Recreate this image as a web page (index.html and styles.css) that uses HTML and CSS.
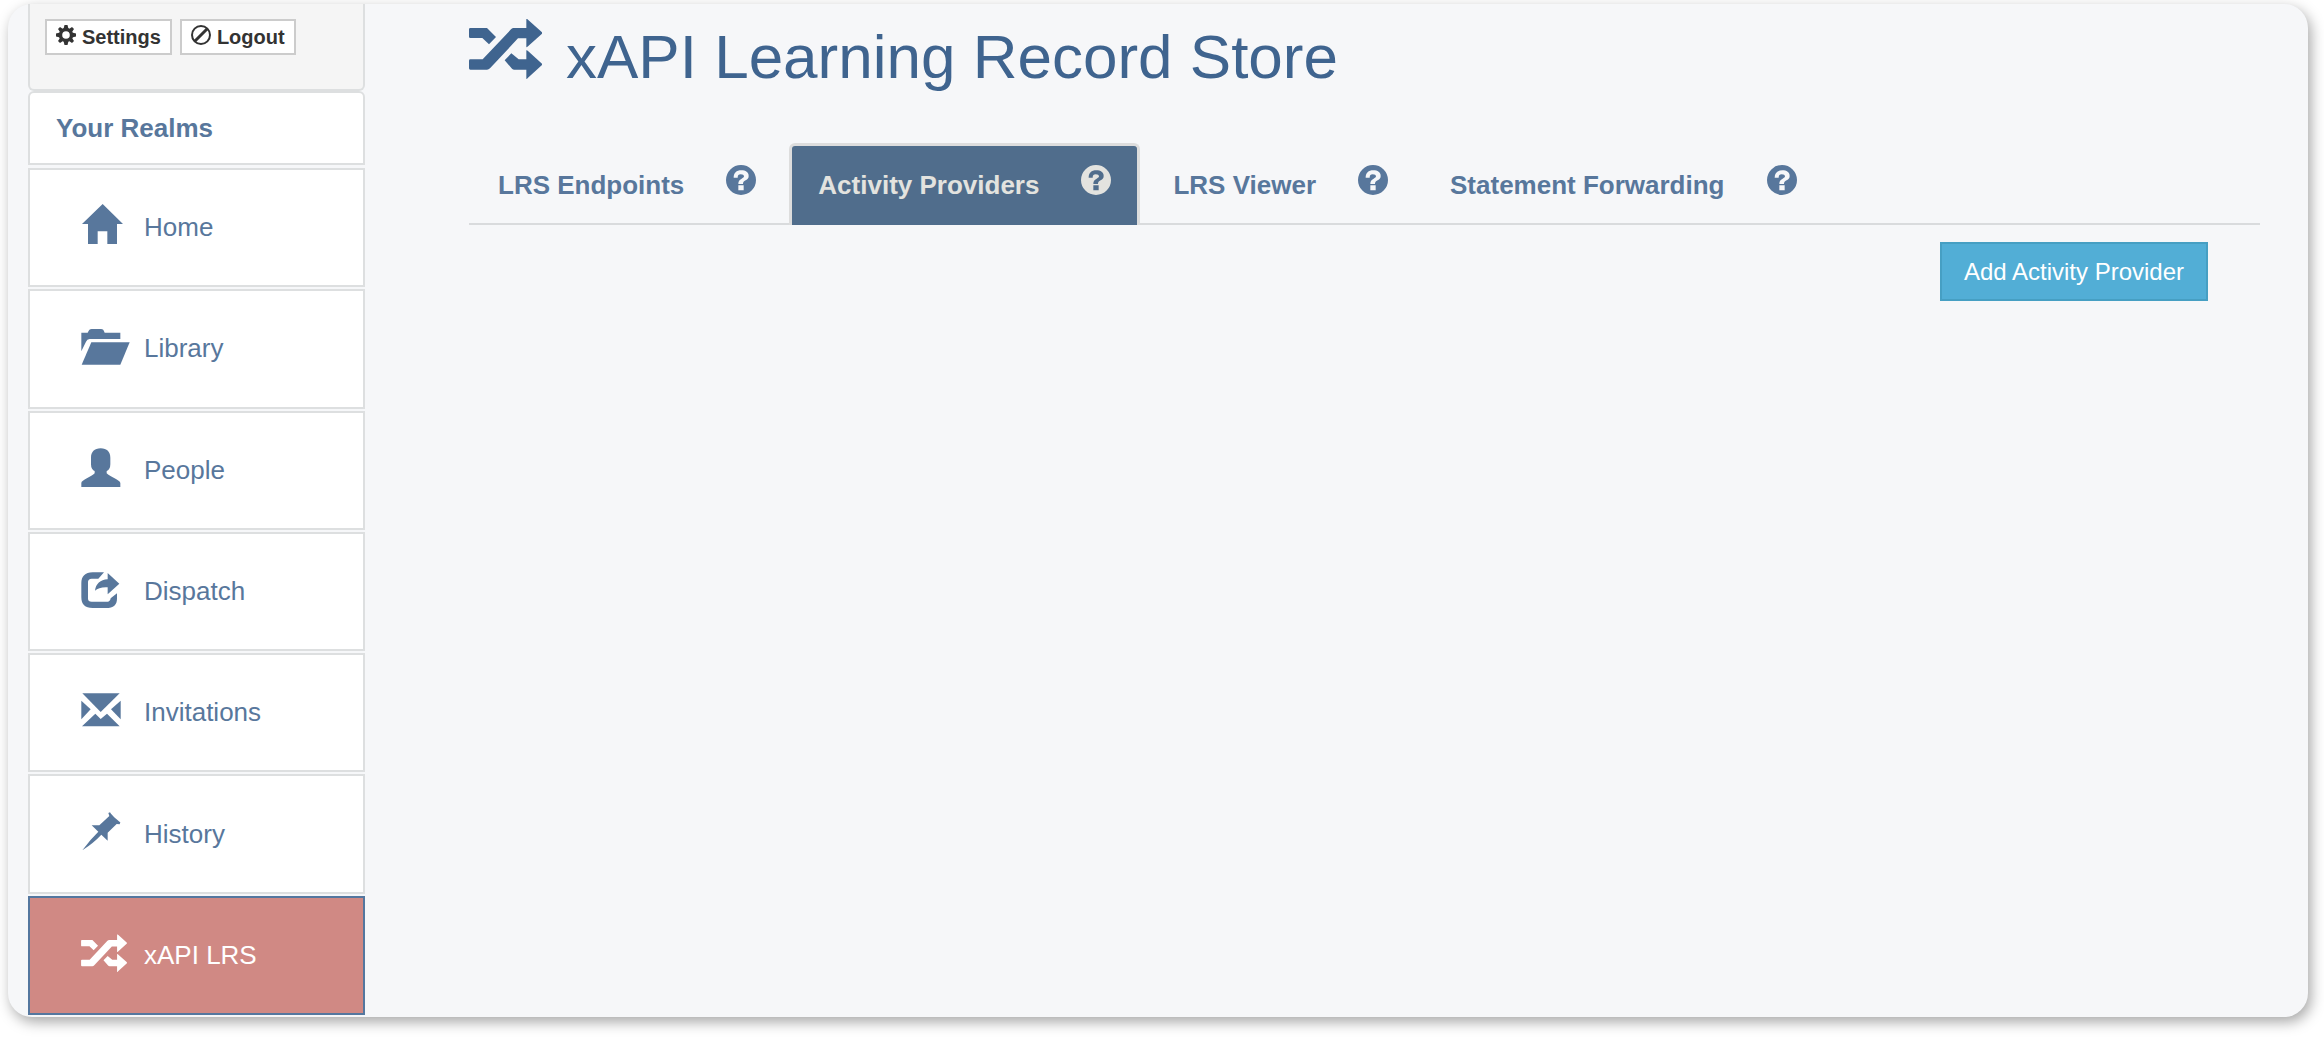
FILE: index.html
```html
<!DOCTYPE html>
<html lang="en">
<head>
    <meta charset="UTF-8">
    <meta name="viewport" content="width=device-width, initial-scale=1.0">
    <title>xAPI Learning Record Store</title>
    <link rel="stylesheet" href="styles.css">
</head>
<body>

    <!-- Shared icons -->
    <svg class="icon-defs" aria-hidden="true">
        <symbol id="icon-shuffle" viewBox="86 57 219 180">
            <path d="M90 84H140L167 111L146 133L126 114H90Q86 114 86 110V88Q86 84 90 84Z"/>
            <path d="M220 84H258V57Q260 56 263 59L305 97V101L263 139Q260 142 258 142V115H233L149 205Q145 209 140 209H90Q86 209 86 205V182Q86 178 90 178H127L212 88Q216 84 220 84Z"/>
            <path d="M213 160L235 178H258V151Q260 150 263 153L305 191V195L263 233Q260 237 258 237V209H222Q218 209 215 206L193 181Z"/>
        </symbol>
        <symbol id="icon-help" viewBox="0 0 90 90">
            <path fill-rule="evenodd" d="M45 0A45 45 0 1 1 45 90A45 45 0 1 1 45 0ZM37 61V76H53V61ZM23 38H35C35 31 38 28 44 28C50 28 54 30 54 34C54 37 51 39 47 41C40 45 37 48 37 57H51C51 51 53 49 59 46C65 43 68 39 68 33C68 22 59 16 46 16C31 16 23 24 23 38Z"/>
        </symbol>
    </svg>

    <div class="window">

        <!-- Sidebar -->
        <div class="sidebar">
            <div class="account">
                <button class="small-button" type="button">
                    <svg class="small-icon" viewBox="0 0 20 20">
                        <circle cx="10" cy="10" r="5.5" fill="none" stroke="currentColor" stroke-width="3.4"/>
                        <path d="M8.5 0H11.5L12.5 4H7.5ZM8.5 20H11.5L12.5 16H7.5ZM0 8.5V11.5L4 12.5V7.5ZM20 8.5V11.5L16 12.5V7.5ZM2 4L4 2L7 4L4 7ZM18 4L16 2L13 4L16 7ZM2 16L4 18L7 16L4 13ZM18 16L16 18L13 16L16 13Z"/>
                    </svg>
                    Settings
                </button>
                <button class="small-button" type="button">
                    <svg class="small-icon" viewBox="0 0 20 20">
                        <circle cx="10" cy="10" r="9" fill="none" stroke="currentColor" stroke-width="2"/>
                        <path d="M4 16L16 4" stroke="currentColor" stroke-width="3"/>
                    </svg>
                    Logout
                </button>
            </div>

            <div class="realms">Your Realms</div>

            <nav class="menu">
                <a class="menu-item" href="#">
                    <svg class="menu-icon" viewBox="0 0 150 120"><path d="M65 0L126 60H108V120H79V82H50V120H21V60H3Z"/></svg>
                    Home
                </a>
                <a class="menu-item" href="#">
                    <svg class="menu-icon" viewBox="0 0 150 120"><path d="M1 23H20C24 15 26 12 32 12H60C66 12 68 15 71 23H118V42H26Q18 42 15 50L1 79Z"/><path d="M31 52H146L118 119H2Z"/></svg>
                    Library
                </a>
                <a class="menu-item" href="#">
                    <svg class="menu-icon" viewBox="0 0 150 120"><path d="M59 4C78 4 88 15 88 32V52C88 64 83 70 77 72V79C86 89 118 100 118 108V120H1V108C1 100 32 89 41 79V72C35 70 30 64 30 52V32C30 15 40 4 59 4Z"/></svg>
                    People
                </a>
                <a class="menu-item" href="#">
                    <svg class="menu-icon" viewBox="0 0 150 120"><path d="M69 13H35C12 13 1 25 1 46V88C1 110 12 120 35 120H75C98 120 108 110 108 92V76L89 91C88 98 84 101 80 101H32C25 101 21 98 21 92V42C21 36 25 32 32 32H52Z"/><path d="M80 15L115 47L80 79V58C62 57 50 61 42 68C44 48 58 35 80 34Z"/></svg>
                    Dispatch
                </a>
                <a class="menu-item" href="#">
                    <svg class="menu-icon" viewBox="0 0 150 120"><path d="M4 13H116L59 69Z"/><path d="M1 35L29 61L1 91Z"/><path d="M119 35V91L90 61Z"/><path d="M3 112L43 74L59 90L78 74L116 112Z"/></svg>
                    Invitations
                </a>
                <a class="menu-item" href="#">
                    <svg class="menu-icon" viewBox="0 0 150 120"><path d="M82 6L87 4C92 12 110 29 118 34L116 40L107 39L80 65V89L61 71Q40 94 4 118Q27 86 52 62L32 43H55L85 15Z"/></svg>
                    History
                </a>
                <a class="menu-item active" href="#">
                    <svg class="menu-icon" viewBox="0 0 150 120"><use href="#icon-shuffle" y="7" width="138" height="113"/></svg>
                    xAPI LRS
                </a>
            </nav>
        </div>

        <!-- Main content -->
        <main class="content">
            <h1 class="title">
                <svg class="title-icon"><use href="#icon-shuffle"/></svg>
                xAPI Learning Record Store
            </h1>

            <nav class="tabs">
                <a class="tab" href="#">LRS Endpoints <svg class="help-icon"><use href="#icon-help"/></svg></a>
                <a class="tab active" href="#">Activity Providers <svg class="help-icon"><use href="#icon-help"/></svg></a>
                <a class="tab" href="#">LRS Viewer <svg class="help-icon"><use href="#icon-help"/></svg></a>
                <a class="tab" href="#">Statement Forwarding <svg class="help-icon"><use href="#icon-help"/></svg></a>
            </nav>

            <div class="actions">
                <button class="add-button" type="button">Add Activity Provider</button>
            </div>
        </main>

    </div>
</body>
</html>
```
FILE: styles.css
```css
* { box-sizing: border-box; }
body { display: flex; min-height: 100vh; margin: 0; padding: 4px 16px 21px 8px; background-color: #fff; font-family: Arial, "Liberation Sans", sans-serif; font-size: 26px; color: #58779c; }
a { color: inherit; text-decoration: none; }
svg { flex: none; fill: currentColor; }
.icon-defs { display: none; }

.window { flex: 1; display: flex; background-color: #f6f7f9; border-radius: 24px; box-shadow: 3px 5px 14px rgba(0,0,0,0.35); }

/* Sidebar */
.sidebar { flex: none; width: 337px; margin-left: 20px; padding-bottom: 2px; display: flex; flex-direction: column; }
.account { display: flex; gap: 8px; padding: 15px 15px 34px; background-color: #f5f5f5; border: 2px solid #dddfe0; border-top: none; border-radius: 0 0 6px 6px; }
.small-button { display: flex; align-items: center; gap: 6px; height: 36px; padding: 0 9px; background-color: #fff; border: 2px solid #ccc; color: #333; font-family: inherit; font-size: 20px; font-weight: bold; cursor: pointer; }
.small-icon { width: 20px; height: 20px; margin-bottom: 4px; }
.realms { margin: 0 0 3px; padding: 20px 26px; line-height: 30px; font-weight: bold; background-color: #fff; border: 2px solid #dddfe0; border-radius: 6px 6px 0 0; }
.menu { flex: 1; display: flex; flex-direction: column; gap: 2px; }
.menu-item { flex: 1; display: flex; align-items: center; gap: 13px; padding-left: 51px; background-color: #fff; border: 2px solid #dddfe0; }
.menu-item.active { background-color: #d08984; border-color: #54779f; color: #fff; }
.menu-icon { width: 50px; height: 40px; margin-bottom: 7px; }

/* Main content */
.content { flex: 1; padding: 15px 48px 0 104px; }
.title { display: flex; align-items: center; gap: 24px; margin: 0; line-height: 70px; font-size: 62px; font-weight: normal; color: #3f648f; }
.title-icon { width: 73px; height: 60px; margin-bottom: 16px; }
.tabs { display: flex; gap: 4px; margin-top: 48px; border-bottom: 2px solid #d9dbdd; }
.tab { display: flex; align-items: center; gap: 42px; height: 82px; margin-bottom: -2px; padding: 0 26px; border: 3px solid transparent; border-bottom: none; border-radius: 6px 6px 0 0; font-weight: bold; }
.tab.active { background-color: #506d8c; border-color: #ddd; color: #e3e3df; }
.help-icon { width: 30px; height: 30px; margin-bottom: 12px; }
.actions { display: flex; justify-content: flex-end; padding: 17px 52px 0 0; }
.add-button { height: 59px; padding: 0 22px; background-color: #52aed6; border: 2px solid #469fc3; color: #fff; font-family: inherit; font-size: 24px; cursor: pointer; }
```
